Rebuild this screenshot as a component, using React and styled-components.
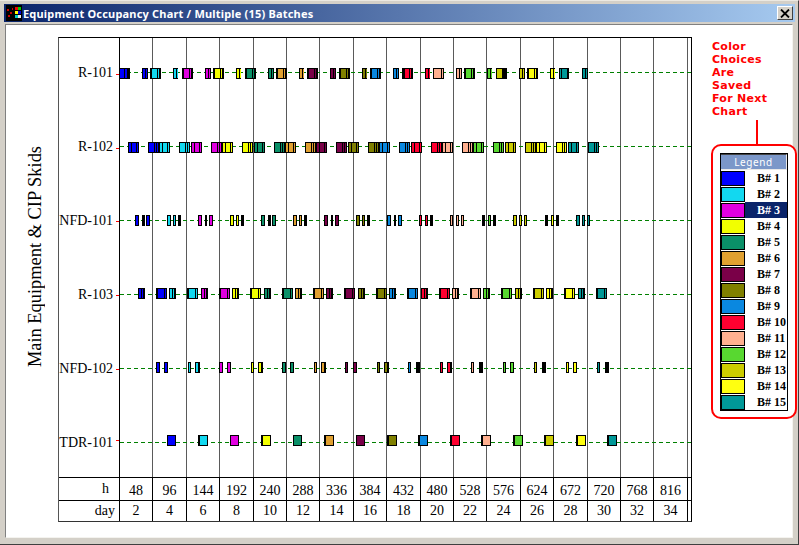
import React from "react";
import styled, { createGlobalStyle } from "styled-components";

const Global = createGlobalStyle`
  html, body { margin: 0; padding: 0; background: #d4d0c8; }
  * { box-sizing: border-box; }
`;

const COLORS = ["#000000", "#0000ff", "#12d8f0", "#e000e0", "#f2ff00", "#0a9068", "#e0a030", "#7a0048", "#808000", "#0a88e0", "#ff0030", "#ffb090", "#58d830", "#cccc00", "#ffff10", "#009898"];
const GRID = [119, 152, 186, 219, 253, 286, 319, 353, 386, 420, 453, 486, 520, 553, 587, 620, 653, 687];
const HOURS = [48, 96, 144, 192, 240, 288, 336, 384, 432, 480, 528, 576, 624, 672, 720, 768, 816];
const DAYS = [2, 4, 6, 8, 10, 12, 14, 16, 18, 20, 22, 24, 26, 28, 30, 32, 34];
const PERIOD = 31.4;
const BATCHES = Array.from({ length: 15 }, (_, i) => i + 1);

const rows = [
  { name: "R-101", y: 72, top: 68, tick: 1 },
  { name: "R-102", y: 146, top: 142, tick: 1 },
  { name: "NFD-101", y: 220, top: 215, tick: 0 },
  { name: "R-103", y: 294, top: 288, tick: 0 },
  { name: "NFD-102", y: 368, top: 362, tick: 0 },
  { name: "TDR-101", y: 442, top: 435, tick: -3 },
];

/* bar = [x, width, colour index, fills as [offset, width] ...] */
const r101 = BATCHES.flatMap((c, i) => {
  const long = Math.round(119 + PERIOD * i);
  const short = Math.round(142 + PERIOD * i);
  let fills = [[2, 5], [8, 1]];
  if (c === 1) fills = [[1, 4], [6, 2]];
  if (c === 10) fills = [[3, 4], [8, 1]];
  if (c === 11) fills = [[1, 7], [9, 1]];
  if (c === 13) fills = [[1, 5]];
  if (c === 15) fills = [[1, 1], [3, 5]];
  return [
    [long, c === 15 ? 10 : 11, c, ...fills],
    [short, c % 2 ? 6 : 5, c, [1, 2], [4, 1]],
  ];
});

const r102 = BATCHES.flatMap((c, i) => {
  const a = Math.round(128 + PERIOD * i);
  const b = Math.round(148 + PERIOD * i);
  return [
    [a, 11, c, [1, 2], [4, 4], [9, 1]],
    [b, 11, c, [1, 5], [7, 1], [9, 1]],
  ];
});

const n101 = [
  [135, 4, 1], [142, 3, 0], [146, 4, 1], [167, 4, 2], [173, 3, 2], [178, 3, 0],
  [198, 4, 3], [205, 2, 0], [209, 4, 3], [230, 4, 4], [236, 3, 4], [241, 3, 0],
  [261, 4, 5], [268, 3, 0], [272, 4, 5], [293, 4, 6], [299, 3, 6], [304, 3, 0],
  [324, 4, 7], [331, 2, 0], [335, 4, 7], [356, 4, 8], [362, 3, 8], [367, 3, 0],
  [387, 4, 9], [394, 2, 0], [398, 4, 9], [419, 3, 10], [425, 3, 10], [430, 3, 0],
  [450, 3, 11], [456, 3, 11], [461, 3, 11], [482, 3, 0], [488, 3, 12], [493, 3, 0],
  [513, 4, 13], [519, 3, 13], [524, 3, 13], [545, 3, 0], [551, 3, 14], [556, 3, 0],
  [576, 4, 15], [582, 3, 15], [587, 3, 15],
].map(([x, w, c]) => [x, w, c, [1, w - 2]]);

const r103 = BATCHES.flatMap((c, i) => {
  const s = Math.round(138 + PERIOD * i);
  const l = Math.round(156 + PERIOD * i);
  return [
    [s, 7, c, [1, 2], [4, 1]],
    [l, 11, c, [2, 6], [9, 1]],
  ];
}).sort((a, b) => a[0] - b[0]);

const n102 = [
  [156, 4, 1], [164, 4, 1], [188, 3, 2], [195, 5, 2], [219, 4, 3], [227, 4, 3],
  [251, 3, 4], [258, 5, 4], [282, 4, 5], [290, 4, 5], [314, 3, 6], [321, 5, 6],
  [345, 3, 7], [353, 4, 7], [377, 3, 8], [384, 5, 8], [408, 3, 9], [416, 4, 0],
  [440, 3, 10], [447, 5, 10], [471, 3, 11], [479, 4, 0], [503, 3, 12], [510, 4, 12],
  [534, 3, 13], [542, 4, 0], [566, 3, 14], [573, 4, 14], [597, 3, 15], [605, 4, 0],
].map(([x, w, c]) => [x, w, c, [1, Math.min(w - 2, 2)]]);

const tdr = [
  [167, 9], [198, 10], [230, 9], [261, 10], [293, 9], [324, 10], [356, 9], [387, 10],
  [418, 10], [450, 10], [481, 10], [513, 10], [544, 10], [576, 10], [607, 10],
].map(([x, w], i) => [x, w, i + 1, [w === 10 ? 2 : 1, 7]]);

const barsByRow = [r101, r102, n101, r103, n102, tdr];

const Window = styled.div`
  width: 799px;
  height: 545px;
  background: #d4d0c8;
  border-top: 1px solid #ece9e2;
  border-right: 1px solid #404040;
  border-bottom: 1px solid #404040;
  padding: 3px 5px 6px 4px;
  display: flex;
  flex-direction: column;
  overflow: hidden;
`;

const TitleBar = styled.div`
  height: 18px;
  flex: none;
  margin-right: -2px;
  background: linear-gradient(90deg, #0a246a 0%, #a6caf0 100%);
  display: flex;
  align-items: center;
  padding: 0 2px 0 2px;
  gap: 1px;
`;

const TitleText = styled.span`
  flex: 1;
  color: #fff;
  font: 700 11px "Noto Sans", "DejaVu Sans", sans-serif;
  letter-spacing: 0.19px;
  white-space: nowrap;
`;

const CloseButton = styled.button`
  width: 16px;
  height: 14px;
  padding: 0;
  background: #d4d0c8;
  border: 1px solid;
  border-color: #fff #404040 #404040 #fff;
  display: flex;
  align-items: center;
  justify-content: center;
`;

const Client = styled.div`
  position: relative;
  flex: 1;
  margin-top: 2px;
  margin-left: 1px;
  background: #fff;
  border-left: 1px solid #808080;
  border-top: 1px solid #808080;
  border-right: 1px solid #f4f3ef;
  border-bottom: 1px solid #f4f3ef;
  padding-top: 12px;
  display: flex;
  align-items: flex-start;
`;

const YAxis = styled.div`
  width: 52px;
  height: 440px;
  flex: none;
  display: flex;
  align-items: center;
  justify-content: center;
  padding-left: 7px;
`;

const YTitle = styled.div`
  writing-mode: vertical-rl;
  transform: rotate(180deg);
  font: 18.4px "Liberation Serif", serif;
  color: #000;
  white-space: nowrap;
`;

const Chart = styled.div`
  width: 634px;
  height: 485px;
  flex: none;
  border-top: 1px solid #000;
  border-right: 1px solid #000;
  border-left: 1px solid #555;
  border-bottom: 1px solid #333;
  display: flex;
  flex-direction: column;
`;

const PlotRow = styled.div`
  display: flex;
  height: 439px;
  flex: none;
`;

const RowLabels = styled.div`
  width: 60px;
  flex: none;
  display: grid;
  grid-auto-rows: 70px;
  row-gap: 4px;
`;

const RowLabel = styled.div`
  display: flex;
  align-items: center;
  justify-content: flex-end;
  font: 14px "Liberation Serif", serif;
  color: #000;
  white-space: nowrap;
`;

const RedTick = styled.i`
  display: block;
  width: 3px;
  height: 1px;
  margin-left: 3px;
  background: #f00;
  margin-top: ${(p) => p.$offset * 2}px;
`;

const AxisRow = styled.div`
  display: grid;
  grid-template-columns: 60px ${(p) => p.$columns};
  height: ${(p) => p.$height}px;
  flex: none;
  border-top: 1px solid #000;
  font: 14px "Liberation Serif", serif;
  color: #000;
`;

const AxisName = styled.div`
  display: flex;
  justify-content: flex-end;
  align-items: center;
  padding-right: ${(p) => p.$pad}px;
  font-size: 14px;
`;

const AxisCell = styled.div`
  border-left: 1px solid #000;
  display: flex;
  align-items: center;
  justify-content: center;
  padding-top: ${(p) => p.$pad}px;
`;

const Annotation = styled.div`
  position: absolute;
  left: 705px;
  top: 15px;
  width: 86px;
  display: flex;
  flex-direction: column;
  align-items: stretch;
`;

const Note = styled.div`
  color: #f00;
  font: 700 11px/13px "DejaVu Sans", sans-serif;
  letter-spacing: 0.3px;
  padding-left: 1px;
  height: 80px;
  white-space: pre-line;
`;

const Connector = styled.div`
  width: 2px;
  height: 24px;
  background: #f00;
  margin-left: 45px;
`;

const LegendFrame = styled.div`
  height: 275px;
  border: 2px solid #f00;
  border-radius: 10px;
  padding: 7px 0 0 7px;
  background: #fff;
`;

const Legend = styled.div`
  width: 68px;
  height: 258px;
  border: 1px solid #000;
  background: #fff;
`;

const LegendHead = styled.div`
  height: 16px;
  background: #7b97c9;
  color: #fff;
  border-bottom: 1px solid #e8e8e8;
  border-right: 1px solid #e8e8e8;
  border-top: 1px solid #444;
  font: 10px "Noto Sans", "DejaVu Sans", sans-serif;
  letter-spacing: 0.6px;
  text-align: center;
  line-height: 14px;
`;

const LegendRow = styled.div`
  height: 16px;
  display: flex;
`;

const Swatch = styled.div`
  width: 24px;
  height: 15px;
  margin-top: 1px;
  flex: none;
  border: 1px solid #000;
  background: ${(p) => p.$color};
`;

const LegendLabel = styled.div`
  flex: 1;
  padding-left: 12px;
  font: 700 12px/16px "Liberation Serif", serif;
  color: ${(p) => (p.$selected ? "#fff" : "#000")};
  background: ${(p) => (p.$selected ? "#0a246a" : "transparent")};
  white-space: nowrap;
`;

function AppIcon() {
  return (
    <svg width="16" height="16" viewBox="0 0 16 16" shapeRendering="crispEdges">
      <rect width="16" height="16" fill="#000" />
      <rect x="1" y="4" width="2" height="2" fill="#c00" />
      <rect x="4" y="7" width="2" height="2" fill="#c00" />
      <rect x="2" y="10" width="2" height="2" fill="#c00" />
      <rect x="6" y="3" width="1" height="2" fill="#c00" />
      <rect x="9" y="2" width="3" height="3" fill="#e00" />
      <rect x="12" y="2" width="3" height="3" fill="#0c0" />
      <rect x="9" y="6" width="3" height="3" fill="#ff0" />
      <rect x="12" y="6" width="3" height="3" fill="#00d" />
      <rect x="9" y="10" width="3" height="3" fill="#0cc" />
      <rect x="12" y="10" width="3" height="3" fill="#eee" />
    </svg>
  );
}

function CloseIcon() {
  return (
    <svg width="10" height="9" viewBox="0 0 10 9">
      <path d="M1 0.5 L9 8.5 M9 0.5 L1 8.5" stroke="#000" strokeWidth="1.8" fill="none" />
    </svg>
  );
}

function Plot() {
  return (
    <svg width="572" height="439" viewBox="119 38 572 439" shapeRendering="crispEdges" style={{ display: "block", flex: "none" }}>
      {GRID.map((x, i) => (
        <line key={x} x1={x + 0.5} x2={x + 0.5} y1="38" y2="477" stroke={i === 0 ? "#000" : "#5a5a5a"} />
      ))}
      {rows.map((r) => (
        <line key={r.name} x1="120" x2="691" y1={r.y + 0.5} y2={r.y + 0.5} stroke="#008000" strokeDasharray="4 3" />
      ))}
      {barsByRow.map((bars, ri) => {
        const top = rows[ri].top;
        return bars.map(([x, w, c, ...fills], bi) => (
          <g key={`${ri}-${bi}`}>
            <rect x={x} y={top} width={w} height={11} fill="#000" />
            {c > 0 && fills.map(([o, fw], fi) => (
              <rect key={fi} x={x + o} y={top + 1} width={fw} height={9} fill={COLORS[c]} />
            ))}
          </g>
        ));
      })}
    </svg>
  );
}

const columns = GRID.map((x, i) => `${(GRID[i + 1] ?? 691) - x}px`).join(" ") + " 4px";

export default function App() {
  return (
    <Window>
      <Global />
      <TitleBar>
        <AppIcon />
        <TitleText>Equipment Occupancy Chart / Multiple (15) Batches</TitleText>
        <CloseButton aria-label="Close"><CloseIcon /></CloseButton>
      </TitleBar>
      <Client>
        <YAxis><YTitle>Main Equipment &amp; CIP Skids</YTitle></YAxis>
        <Chart>
          <PlotRow>
            <RowLabels>
              {rows.map((r) => (
                <RowLabel key={r.name}>
                  {r.name}
                  <RedTick $offset={r.tick} />
                </RowLabel>
              ))}
            </RowLabels>
            <Plot />
          </PlotRow>
          <AxisRow $columns={columns} $height={23}>
            <AxisName $pad={10}>h</AxisName>
            {HOURS.map((h) => <AxisCell key={h} $pad={4}>{h}</AxisCell>)}
            <AxisCell />
          </AxisRow>
          <AxisRow $columns={columns} $height={21}>
            <AxisName $pad={4}>day</AxisName>
            {DAYS.map((d) => <AxisCell key={d} $pad={0}>{d}</AxisCell>)}
            <AxisCell />
          </AxisRow>
        </Chart>
        <Annotation>
          <Note>{"Color\nChoices\nAre\nSaved\nFor Next\nChart"}</Note>
          <Connector />
          <LegendFrame>
            <Legend>
              <LegendHead>Legend</LegendHead>
              {BATCHES.map((b) => (
                <LegendRow key={b}>
                  <Swatch $color={COLORS[b]} />
                  <LegendLabel $selected={b === 3}>B# {b}</LegendLabel>
                </LegendRow>
              ))}
            </Legend>
          </LegendFrame>
        </Annotation>
      </Client>
    </Window>
  );
}
